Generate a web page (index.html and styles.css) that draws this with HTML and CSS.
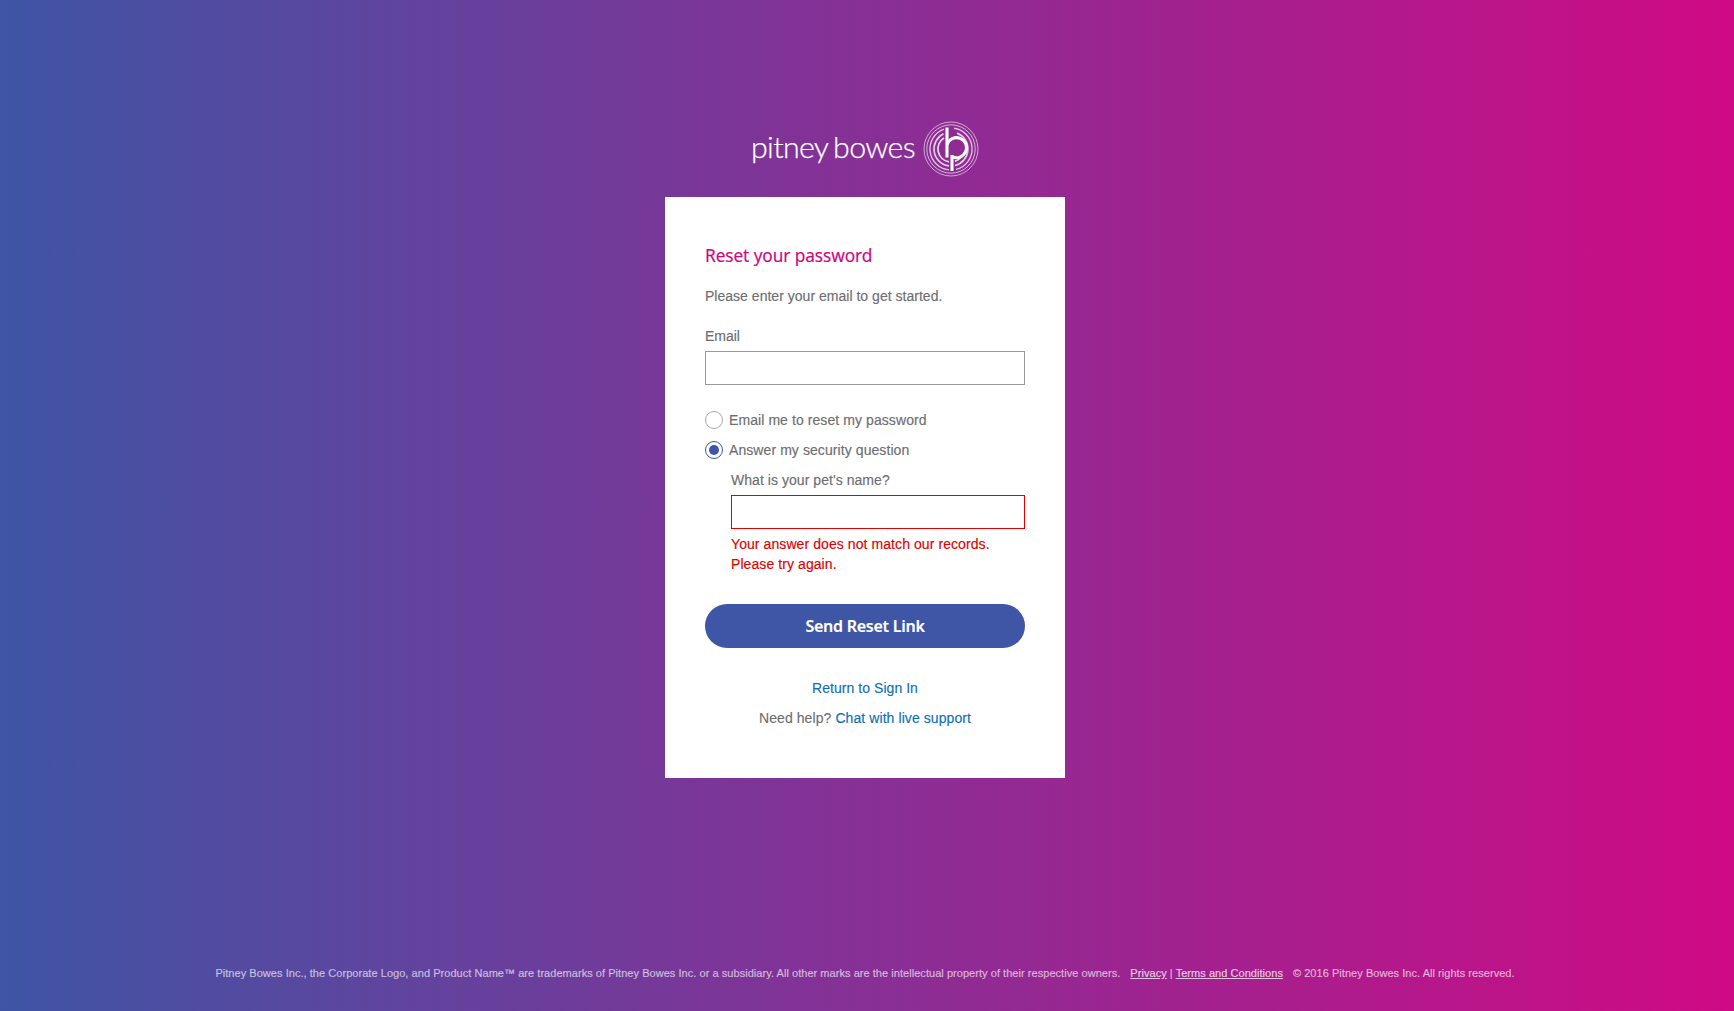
FILE: index.html
```html
<!DOCTYPE html>
<html lang="en">
<head>
<meta charset="utf-8">
<title>Reset your password</title>
<link rel="stylesheet" href="styles.css">
</head>
<body>
<header class="brand">
  <span class="brand-name">pitney bowes</span>
  <svg class="brand-mark" width="56" height="56" viewBox="-28 -28 56 56" aria-hidden="true">
    <g fill="none" stroke="#fff">
      <circle r="27" stroke-width="0.9" opacity=".65"/>
      <circle r="24.2" stroke-width="1" opacity=".65"/>
      <path d="M3 -20.8A21 21 0 0 1 5 20.4M-7 -19.8A21 21 0 0 0 -2 20.9" stroke-width="1.4" opacity=".7"/>
      <path d="M6 -15.9A17 17 0 0 1 4 16.5M-7.5 -15.25A17 17 0 0 0 -2 16.9" stroke-width="1.7" opacity=".75"/>
      <path d="M-7 -11A13 13 0 0 0 -2 12.8M4 12.4A13 13 0 0 0 10 8.3" stroke-width="1.8" opacity=".8"/>
      <path d="M-4 -21.5V8.5" stroke-width="3.1"/>
      <path d="M-4 -4.5A10 10 0 1 1 1 7.6" stroke-width="3"/>
      <path d="M1 6V22" stroke-width="3.1"/>
    </g>
  </svg>
</header>
<main class="card">
  <h1 class="title">Reset your password</h1>
  <p class="intro">Please enter your email to get started.</p>
  <label class="field-label" for="email">Email</label>
  <input class="text-input" id="email" type="text">
  <div class="options">
    <label class="option"><span class="radio"></span>Email me to reset my password</label>
    <label class="option"><span class="radio radio-on"></span>Answer my security question</label>
  </div>
  <div class="question">
    <label class="field-label" for="answer">What is your pet's name?</label>
    <input class="text-input text-input-error" id="answer" type="text">
    <p class="error">Your answer does not match our records.<br>Please try again.</p>
  </div>
  <button class="submit" type="button">Send Reset Link</button>
  <p class="return"><a class="link" href="#">Return to Sign In</a></p>
  <p class="help">Need help? <a class="link" href="#">Chat with live support</a></p>
</main>
<footer class="legal">
  <span>Pitney Bowes Inc., the Corporate Logo, and Product Name™ are trademarks of Pitney Bowes Inc. or a subsidiary. All other marks are the intellectual property of their respective owners.</span>
  <span class="legal-links"><a href="#">Privacy</a> | <a href="#">Terms and Conditions</a></span>
  <span>© 2016 Pitney Bowes Inc. All rights reserved.</span>
</footer>
</body>
</html>
```
FILE: styles.css
```css
* { box-sizing: border-box; }
html, body { height: 100%; }
body {
  margin: 0;
  padding-right: 4px;
  min-height: 1011px;
  display: flex;
  flex-direction: column;
  align-items: center;
  background: linear-gradient(90deg, #3f55a5 0%, #cf0a85 100%);
  font-family: "Liberation Sans", Arial, sans-serif;
  color: #6d6e71;
}
.brand {
  height: 197px;
  padding-top: 120px;
  display: flex;
  align-items: flex-start;
  gap: 8px;
}
.brand-name {
  font-family: Lato, sans-serif;
  font-weight: 300;
  font-size: 30.4px;
  line-height: 52px;
  letter-spacing: -0.7px;
  word-spacing: -2px;
  color: #fff;
  -webkit-text-stroke: 0.25px #fff;
}
.brand-mark { margin-top: 1px; }
.card {
  width: 400px;
  height: 581px;
  padding: 46px 40px 0;
  background: #fff;
  font-size: 14px;
  letter-spacing: 0.05px;
  -webkit-text-stroke: 0.15px currentColor;
}
.title {
  margin: 0;
  font-family: "Noto Sans", sans-serif;
  font-size: 17.3px;
  font-weight: 400;
  line-height: 26px;
  letter-spacing: -0.1px;
  color: #d0077f;
}
.intro { margin: 17px 0 0; line-height: 20px; letter-spacing: 0.02px; }
.field-label { display: block; line-height: 20px; }
.intro + .field-label { margin-top: 20px; letter-spacing: -0.05px; }
.text-input {
  display: block;
  width: 100%;
  height: 34px;
  margin-top: 5px;
  padding: 0 8px;
  background: #fff;
  border: 1px solid #999;
  border-radius: 0;
  outline: none;
}
.text-input-error { border-color: #e00000; }
.options { margin-top: 25px; display: flex; flex-direction: column; gap: 10px; }
.option { display: flex; align-items: center; gap: 6px; height: 20px; letter-spacing: 0.08px; }
.radio {
  width: 18px;
  height: 18px;
  border: 1px solid #a8a8a8;
  border-radius: 50%;
  background: #fff;
  display: flex;
  align-items: center;
  justify-content: center;
}
.radio-on { border-color: #3f55a5; }
.radio-on::after {
  content: "";
  width: 10px;
  height: 10px;
  border-radius: 50%;
  background: #3f55a5;
}
.question { margin: 10px 0 0 26px; }
.error { margin: 5px 0 0; line-height: 20px; color: #e00000; letter-spacing: 0.08px; }
.submit {
  display: block;
  width: 100%;
  height: 44px;
  margin-top: 30px;
  border: 0;
  border-radius: 22px;
  background: #3f55a5;
  color: #fff;
  font-family: "Noto Sans", sans-serif;
  font-size: 16px;
  font-weight: 600;
  letter-spacing: -0.25px;
}
.return, .help { margin: 0; text-align: center; line-height: 20px; }
.return { margin-top: 30px; }
.help { margin-top: 10px; letter-spacing: 0.08px; }
.link { color: #0f6fb5; text-decoration: none; }
.legal {
  margin-top: auto;
  height: 38px;
  display: flex;
  gap: 10px;
  font-size: 11px;
  line-height: 0;
  letter-spacing: 0.045px;
  color: rgba(255, 255, 255, .6);
  -webkit-text-stroke: 0.2px currentColor;
}
.legal a { color: rgba(255, 255, 255, .72); }
```
